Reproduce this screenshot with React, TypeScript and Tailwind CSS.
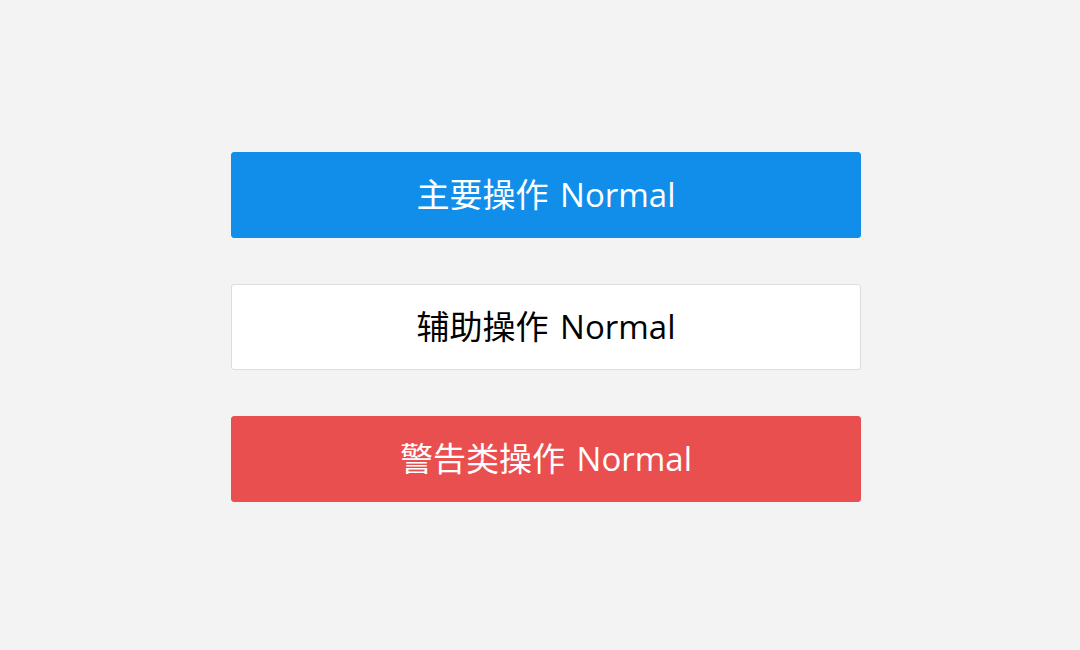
const buttons = [
  { label: "主要操作 Normal", className: "bg-[#108ee9] text-white border-[#108ee9]" },
  { label: "辅助操作 Normal", className: "bg-white text-black border-[#dddddd]" },
  { label: "警告类操作 Normal", className: "bg-[#e94f4f] text-white border-[#e94f4f]" },
];

export default function App() {
  return (
    <div
      className="w-[1080px] h-[650px] bg-[#f3f3f3] flex flex-col items-center pt-[152px] pl-[12px] gap-[46px]"
      style={{ fontFamily: '"Open Sans", "Noto Sans CJK SC", sans-serif' }}
    >
      {buttons.map((b) => (
        <button
          key={b.label}
          className={`w-[630px] h-[86px] rounded-[3px] border flex items-center justify-center text-[33px] [word-spacing:3px] ${b.className}`}
        >
          {b.label}
        </button>
      ))}
    </div>
  );
}
